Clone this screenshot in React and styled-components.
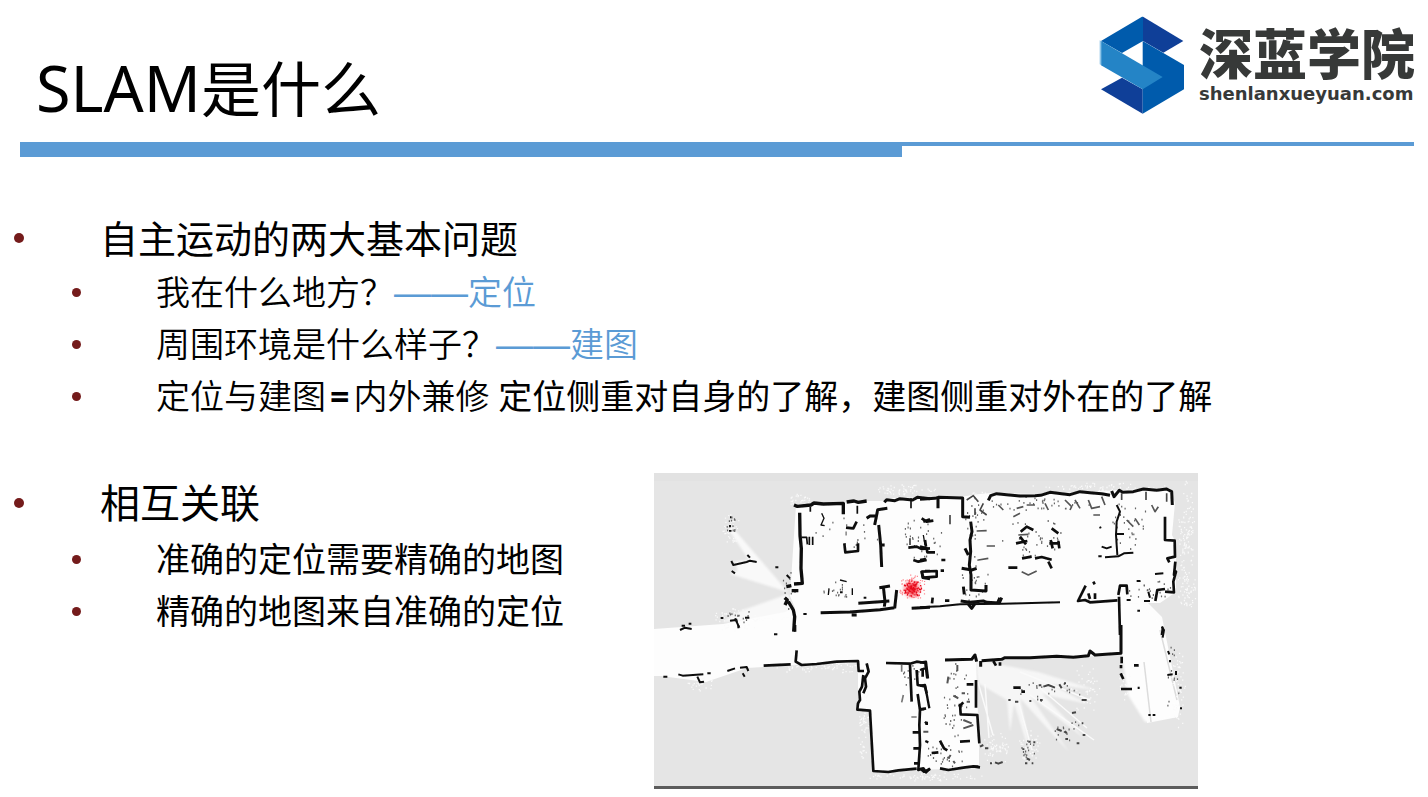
import React from "react";
import styled, { createGlobalStyle } from "styled-components";

const GlobalStyle = createGlobalStyle`
  * { box-sizing: border-box; }
  body {
    margin: 0;
    background: #fff;
    color: #000;
    font-family: "Noto Sans", "Noto Sans CJK SC", sans-serif;
  }
`;

const Slide = styled.main`
  width: 100%;
  overflow: hidden;
`;

const Header = styled.header`
  display: flex;
  justify-content: space-between;
  align-items: flex-start;
  height: 142px;
  padding: 0 14px 0 36px;
`;

const Title = styled.h1`
  margin: 0;
  padding-top: 44px;
  font-size: 60px;
  line-height: 88px;
  font-weight: 400;
  white-space: nowrap;
`;

const Acronym = styled.span`
  font-size: 63px;
`;

const Brand = styled.div`
  display: flex;
  gap: 14px;
  padding-top: 16px;
`;

const BrandText = styled.div`
  display: flex;
  flex-direction: column;
  gap: 2px;
  width: 215px;
  padding-top: 6px;
  color: #373938;
  white-space: nowrap;
`;

const BrandName = styled.span`
  font-family: "Noto Sans CJK SC", sans-serif;
  font-size: 54px;
  line-height: 60px;
  font-weight: 900;
`;

const BrandUrl = styled.span`
  font-family: "DejaVu Sans", sans-serif;
  font-size: 18px;
  line-height: 20px;
  font-weight: 700;
`;

const Rule = styled.div`
  display: flex;
  align-items: flex-start;
  margin: 0 14px 0 20px;
`;

const RulePart = styled.div`
  flex: ${(p) => p.$grow} 0 0;
  height: ${(p) => p.$height};
  background: #5b9bd5;
`;

const Topic = styled.section`
  padding-top: ${(p) => p.$top};
`;

const Heading = styled.h2`
  display: flex;
  align-items: center;
  gap: 76px;
  margin: 0;
  padding-left: 14px;
  font-size: ${(p) => p.$size};
  line-height: ${(p) => p.$line};
  font-weight: 400;
  white-space: nowrap;
  &::before {
    content: "";
    width: 10px;
    height: 10px;
    border-radius: 50%;
    background: #741b1b;
  }
`;

const Points = styled.ul`
  margin: 0;
  padding: 0;
  list-style: none;
`;

const Point = styled.li`
  display: flex;
  align-items: center;
  gap: 75px;
  height: 52px;
  padding-left: 72px;
  font-size: 34px;
  line-height: 52px;
  font-weight: ${(p) => p.$weight || 400};
  white-space: nowrap;
  &::before {
    content: "";
    width: 9px;
    height: 9px;
    border-radius: 50%;
    background: #741b1b;
  }
`;

const Answer = styled.span`
  color: #5b9bd5;
`;

const Dash = styled.span`
  font-family: "Liberation Sans", sans-serif;
  font-size: 37px;
  line-height: 34px;
`;

const Equals = styled.span`
  padding: 0 4px;
  font-weight: 700;
`;

const Note = styled.span`
  font-weight: 400;
`;

const Lower = styled.div`
  display: grid;
  grid-template-columns: 654fr 544fr 230fr;
  align-items: start;
  padding-top: 51px;
`;

const Figure = styled.figure`
  margin: 0;
  border-bottom: 3px solid #5c5c5c;
  background: #e5e5e5;
  svg { display: block; width: 100%; height: auto; }
`;

function LogoMark() {
  return (
    <svg width="86" height="99" viewBox="29 45 258 297" role="img" aria-label="深蓝学院">
      <path d="M35 120 158 47 161 47 161 120 98 156Z" fill="#005bac" />
      <path d="M161 47 282 120 222 155 161 120Z" fill="#0f3f98" />
      <path d="M35 265 98 230 160 265V338Z" fill="#0f3f98" />
      <path d="M160 120 284 192V265L160 338Z" fill="#005bac" />
      <path d="M35 120 220 228 160 265 35 193Z" fill="#2484c6" />
      <path d="M31 118 36 121V193L31 190Z" fill="#8fc5e8" />
    </svg>
  );
}

function scatter(seed, cx, cy, rx, ry, count) {
  let s = seed;
  const next = () => {
    s = (s * 16807) % 2147483647;
    return s / 2147483647;
  };
  next();
  let d = "";
  for (let i = 0; i < count; i += 1) {
    const a = next() * Math.PI * 2;
    const r = Math.pow(next(), 0.7);
    const x = Math.round((cx + Math.cos(a) * rx * r) * 10) / 10;
    const y = Math.round((cy + Math.sin(a) * ry * r) * 10) / 10;
    d += `M${x} ${y}h1.2`;
  }
  return d;
}

const paleSpecks = [
  [905, 490, 30, 5, 60], [731, 530, 9, 18, 40], [798, 500, 12, 6, 30], [1186, 530, 8, 50, 110],
  [1186, 590, 10, 20, 60], [1100, 487, 70, 4, 60], [735, 620, 25, 12, 60], [820, 668, 45, 6, 60],
  [863, 715, 6, 45, 80], [925, 777, 60, 4, 70], [995, 750, 14, 18, 60], [1085, 690, 15, 25, 50],
  [1178, 690, 8, 40, 60], [700, 684, 14, 7, 30], [1030, 745, 12, 18, 40], [980, 500, 12, 10, 40],
  [1125, 685, 8, 15, 30],
];

const greySpecks = [
  [1035, 540, 34, 22, 34], [920, 540, 22, 24, 28], [1035, 503, 60, 8, 34], [1130, 525, 18, 28, 28],
  [975, 580, 14, 26, 26], [955, 700, 14, 40, 40], [840, 590, 18, 8, 16], [850, 530, 35, 18, 18],
  [1150, 590, 24, 12, 24], [731, 527, 5, 14, 12], [738, 616, 14, 7, 16], [975, 520, 10, 24, 20],
  [1050, 690, 32, 12, 22], [1068, 732, 20, 14, 14], [1028, 750, 8, 14, 14], [945, 755, 25, 12, 26],
  [790, 590, 8, 20, 16], [1172, 680, 7, 35, 12], [910, 675, 10, 12, 12],
];

function OccupancyMap() {
  return (
    <svg viewBox="654 473 544 313" role="img" aria-label="SLAM 栅格地图">
      <defs>
        <filter id="soft" x="-5%" y="-5%" width="110%" height="110%">
          <feGaussianBlur stdDeviation="0.6" />
        </filter>
        <filter id="haze" x="-10%" y="-10%" width="120%" height="120%">
          <feGaussianBlur stdDeviation="1.2" />
        </filter>
      </defs>
      <path d="M654 473H1198V481H654Z" fill="#dfdfdf" opacity=".6" />

      {/* scanned free space */}
      <g fill="#fdfdfd">
        <path d="M796 505 838 503 868 501 884 501 889 498 960 497 980 494 992 493 1040 494 1100 491 1170 488 1175 503 1172 535 1176 543 1176 592 1160 603 1148 603 1162 617 1180 707 1178 717 1147 723 1138 660 1122 655 976 661 979 742 979 768 950 769 874 771 870 711 858 709 858 663 797 665 763 667 747 668 706 682 661 676 654 676V629L723 624 785 612 795 608 790 596Z" />
        <g filter="url(#haze)">
          <path d="M788 592 733 528 729 530 749 560 734 562 738 570 730 574Z" opacity=".85" />
          <path d="M788 594 740 611 722 622 795 618Z" opacity=".8" />
          <path d="M976 660 1038 672 1096 690 1050 684 1088 704 1042 694 1084 738 1030 696 1069 752 1020 698 1032 760 1014 703 1010 732 1007 700 978 683Z" opacity=".7" />
          <path d="M1122 655 1128 695 1145 722 1176 716 1162 625 1140 604 1123 604Z" />
        </g>
      </g>
      <path
        d="M978 682 993 735M985 684 989 738M1018 700 1032 750M1030 695 1094 740M1040 688 1087 728M1020 672 1090 700"
        fill="none"
        stroke="#fafafa"
        strokeWidth="1.5"
      />
      <path d="M1144 662 1151 722M1160 630 1177 700" stroke="#dcdcdc" strokeWidth="1.5" />
      {paleSpecks.map((c, i) => (
        <path key={i} d={scatter(i * 97 + 11, ...c)} stroke="#fafafa" strokeWidth="1.3" />
      ))}
      <g filter="url(#soft)">
        {greySpecks.map((c, i) => (
          <path key={i} d={scatter(i * 131 + 29, ...c)} stroke="#666" strokeWidth="1.8" />
        ))}
      </g>

      <g fill="none" stroke="#0c0c0c" strokeLinejoin="round" filter="url(#soft)">
        {/* north-west rooms */}
        <g transform="translate(650 465) scale(.333333)" strokeWidth="9">
          <path d="M432 120 442 124 483 120 492 114 520 117 580 115V148M590 111 612 108 625 112 650 108" strokeWidth="10" />
          <path d="M449 143 450 210 454 250 453 310 457 355 432 357M425 377H445M409 365 424 362M404 398 412 405 405 420M415 410 430 435 434 455 431 500" strokeWidth="10" />
          <path d="M703 112 710 104 735 107 750 101 788 105 802 97 840 101M712 130 683 134 680 150 674 180M650 160 660 153 680 152M686 180 692 240 695 306M695 240H704" />
          <path d="M783 100V130M622 122V146M481 125V140M455 217H470L472 238M478 215V240M488 215V240" strokeWidth="5" />
          <path d="M583 235 586 262 624 258V235M588 188 610 190 620 170M820 170 840 163M825 318H840M815 318 818 338 840 342M775 248 800 245 815 252 840 250M790 285 805 290 830 285" strokeWidth="8" />
          <path d="M780 240V220M515 145 522 160 513 180 524 182M537 370 535 390M570 345 590 350M607 370V390M820 210 825 240" strokeWidth="4" />
          <path d="M512 443 600 441 690 434 733 428M625 415 690 410 718 408M700 365 705 410 703 425M688 368 720 363M740 375 734 430M605 450H620M785 430 840 427" />
          <path d="M244 288 250 300 290 291 300 287 320 291M240 180V187M240 195V200M292 270 300 278M410 330 420 340M255 460 268 488M240 467 262 464M460 447H470M212 459H220M95 482H105M116 476H124" strokeWidth="6" />
          <path d="M240 157H244M285 458H298M376 307H385M245 318 255 325M570 382H578M641 398H649" strokeWidth="6" />
        </g>
        {/* north-east rooms */}
        <g transform="translate(920 465) scale(.333333)" strokeWidth="9">
          <path d="M0 103 45 100 55 97 128 99V155L150 157M54 98V130" />
          <path d="M205 106 212 92 230 86 260 89 300 93 345 92 362 91 390 82 425 86 450 89 480 80 510 83 545 86 570 91M575 78 582 95 598 76 608 82 640 80 670 72 710 76 740 72 755 80 757 120" />
          <path d="M735 155V225L764 227 765 275 742 280 748 292M766 290 762 330 768 320 760 350 762 382 735 380M706 408 712 375 735 372" strokeWidth="8" />
          <path d="M152 170 156 200 150 225 152 260 148 300 153 330 153 375 198 378V360M125 310 155 315 170 310M130 365 133 388M135 250 145 270M122 408 150 412 190 408 200 412 238 414 245 398M145 418 155 430 165 416" strokeWidth="9" />
          <path d="M0 427 60 424 120 418 250 416 420 412M238 398 230 417" strokeWidth="6" />
          <path d="M497 362 474 408 495 405 510 412 592 406M505 385 510 402M525 385V402M597 395 600 510M595 390 600 362 620 362 622 388M520 350 524 358" strokeWidth="8" />
          <path d="M535 274H545M555 277 595 274 612 265 640 263M590 120 600 140 590 170 588 210 592 270M545 245 560 250 575 245M540 185 542 190M588 207H612" strokeWidth="6" />
          <path d="M288 235 322 228M300 215 318 238M388 235H420M392 225 398 250M415 228 418 250M306 280 335 275M345 280 365 276 395 284M385 290 395 310M265 308H292M302 200 320 185 340 195M395 190 415 205" strokeWidth="8" />
          <path d="M305 320 325 330 350 318M295 210 325 208M200 243H225M175 285 205 280M170 198 200 197M235 120 250 135M290 130 310 125M320 120H345M375 115 385 135M435 105 455 125 450 135M465 105 480 130M505 105 515 130 540 125M545 95 555 120M695 120 705 140 715 125M620 165 640 185M645 160 658 180M520 150H540M280 155 300 145" strokeWidth="5" stroke="#555" />
          <path d="M140 105 160 92 175 110M190 115 180 135 200 150M165 130V150M605 85V105M90 150V178M678 80V105M740 85V110" strokeWidth="5" stroke="#444" />
          <path d="M0 245 20 250 22 262 45 262M15 225 18 245M5 160 20 170 40 167M0 285 18 282M5 320 50 318V335L10 338ZM64 285H76M62 317H72M38 398 36 415M75 407H88" strokeWidth="8" />
          <path d="M705 327 730 325M685 380 690 398M672 408H690M620 405H632M650 348H660M728 485 725 510M652 437H660" strokeWidth="6" />
        </g>
        {/* south-west rooms */}
        <g transform="translate(650 625) scale(.333333)" strokeWidth="9">
          <path d="M435 0V20M440 76 437 110 455 120 500 117 560 110 624 108 626 138 642 138M341 122 422 118" strokeWidth="8" />
          <path d="M650 115 656 140 645 160 648 185 640 205M640 150 636 185 628 200 630 225 624 235 622 254 660 257 664 330 670 438 715 441 745 436 800 431" strokeWidth="8" />
          <path d="M708 114 780 116 800 110 826 114 832 160M780 120 785 230M800 135 803 180 825 184 830 205M803 207 810 255 808 300 810 360 805 435 820 430 828 442 840 430M788 322H808M790 370H808M792 415H808M818 130V155M830 290V300M808 255 828 250" strokeWidth="8" />
          <path d="M85 148 98 152 160 148M172 145H182M142 155 150 172 162 170M270 128 290 126 295 138M278 145 284 155M232 138 255 130M40 155H52M372 28H382M90 15 105 8 125 12M265 0V10" strokeWidth="6" />
          <path d="M755 120V140M760 210 755 232M784 276H800" strokeWidth="5" stroke="#777" />
        </g>
        {/* south-east rooms */}
        <g transform="translate(920 625) scale(.333333)" strokeWidth="9">
          <path d="M603 0V85L525 90 510 78 505 92 460 97 410 94 330 98 255 98 245 103 185 107M75 105 155 103 165 90 170 110M182 108V125" />
          <path d="M168 165 168 248M120 236 122 268 172 270 178 355M140 178H160M122 240 130 232M120 350 150 348M35 384 55 382M60 347 72 370 82 376M165 425 180 427M60 430 85 435 130 428 160 424 175 425M0 430 12 440 30 432" strokeWidth="8" />
          <path d="M0 113 18 110 24 160M0 182 15 180 28 250M0 135 15 130M0 252H12M15 290 22 298M16 348 25 352" strokeWidth="7" />
          <path d="M605 95V115M603 120V130M602 145 610 162M603 192H636M642 121H656" strokeWidth="8" />
          <path d="M280 188H302M304 200H315M220 108 228 122M240 112V122" strokeWidth="8" />
          <path d="M356 181H364M370 185 385 180 405 188M418 178 425 190M432 175H438M265 225H272M285 230H295M328 228H334M360 225H368M456 264 468 262M485 225H500M485 295H490M410 312 425 318M435 318 440 325M436 342H444M488 330H496M470 355H478M325 350H332M340 352H346M310 370V375M320 400 330 405M315 415H322M335 415H340M210 415H216M225 412 235 416 248 411M180 365 190 360M195 370H205" strokeWidth="6" stroke="#444" />
          <path d="M100 212 115 220M125 205H135M140 230H150M112 120V138M85 155 82 175M85 400 92 390M100 408 105 415M130 285 155 295M130 310 160 300M10 320H25" strokeWidth="6" stroke="#555" />
          <path d="M725 5 732 15 728 38M744 78 748 88M750 105V112M742 150 758 148M768 138V150M778 188H785M780 250H786M685 270H692M698 270H706M656 185V192" strokeWidth="6" />
        </g>
      </g>

      {/* estimated robot pose */}
      <circle cx="912" cy="589" r="9" fill="#ff2d3c" opacity=".35" filter="url(#haze)" />
      <circle cx="912" cy="589" r="5" fill="#e8101f" opacity=".8" filter="url(#haze)" />
      <path d={scatter(501, 912, 588, 14, 13, 90)} stroke="#ff5560" strokeWidth="1.2" opacity=".7" />
      <path d={scatter(77, 912, 589, 9, 9, 90)} stroke="#e60b1c" strokeWidth="1.4" />
    </svg>
  );
}

export default function App() {
  return (
    <>
      <GlobalStyle />
      <Slide>
        <Header>
          <Title><Acronym>SLAM</Acronym>是什么</Title>
          <Brand>
            <LogoMark />
            <BrandText>
              <BrandName>深蓝学院</BrandName>
              <BrandUrl>shenlanxueyuan.com</BrandUrl>
            </BrandText>
          </Brand>
        </Header>
        <Rule>
          <RulePart $grow={882} $height="15px" />
          <RulePart $grow={512} $height="4px" />
        </Rule>
        <Topic $top="53px">
          <Heading $size="38px" $line="56px">自主运动的两大基本问题</Heading>
          <Points>
            <Point $weight={350}>
              <span>我在什么地方？<Answer><Dash>——</Dash>定位</Answer></span>
            </Point>
            <Point $weight={350}>
              <span>周围环境是什么样子？<Answer><Dash>——</Dash>建图</Answer></span>
            </Point>
            <Point $weight={350}>
              <span>定位与建图<Equals>=</Equals>内外兼修 <Note>定位侧重对自身的了解，建图侧重对外在的了解</Note></span>
            </Point>
          </Points>
        </Topic>
        <Lower>
          <Topic $top="0">
            <Heading $size="40px" $line="60px">相互关联</Heading>
            <Points>
              <Point>准确的定位需要精确的地图</Point>
              <Point>精确的地图来自准确的定位</Point>
            </Points>
          </Topic>
          <Figure>
            <OccupancyMap />
          </Figure>
        </Lower>
      </Slide>
    </>
  );
}
